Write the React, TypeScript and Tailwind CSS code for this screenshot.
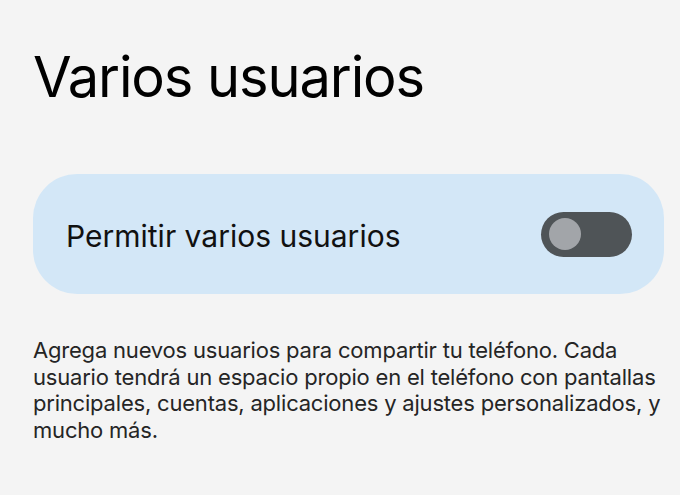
export default function App() {
  return (
    <div className="w-[680px] h-[495px] bg-[#f4f4f4] px-[33px] pt-[42px] overflow-hidden" style={{ fontFamily: 'Inter, "Noto Sans", sans-serif' }}>
      <h1 className="text-[56px] leading-[70px] text-black font-normal tracking-[-1.1px]">Varios usuarios</h1>
      <div className="mt-[62px] h-[120px] w-[631px] rounded-[44px] bg-[#d3e7f7] flex items-center justify-between pl-[33px] pr-[32px]">
        <span className="pt-[4px] text-[30px] text-[#111]">Permitir varios usuarios</span>
        <div className="w-[91px] h-[45px] rounded-full bg-[#4f5457] flex items-center pl-[8px]">
          <div className="w-[32px] h-[32px] rounded-full bg-[#a2a5a9]" />
        </div>
      </div>
      <p className="mt-[43px] w-[640px] text-[22px] leading-[26.7px] text-[#252525] tracking-[-0.2px]">
        Agrega nuevos usuarios para compartir tu teléfono. Cada usuario tendrá un espacio propio en el teléfono con pantallas principales, cuentas, aplicaciones y ajustes personalizados, y mucho más.
      </p>
    </div>
  );
}
